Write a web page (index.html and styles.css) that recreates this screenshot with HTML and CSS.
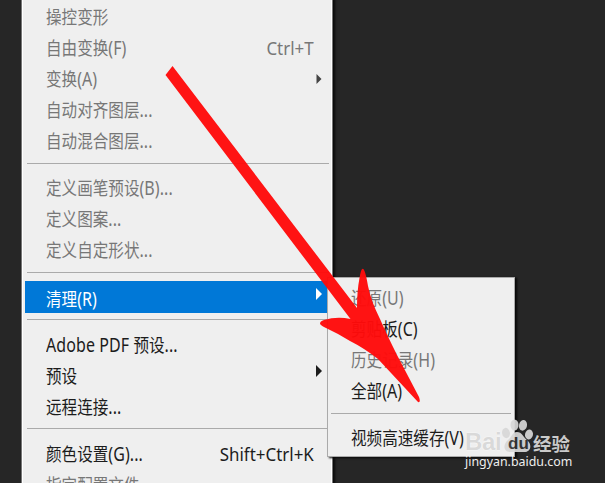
FILE: index.html
```html
<!DOCTYPE html>
<html lang="zh-CN">
<head>
<meta charset="utf-8">
<title>编辑菜单</title>
<link rel="stylesheet" href="styles.css">
</head>
<body>
<main class="stage">
  <nav class="menu">
    <div class="item off"><span class="label">操控变形</span></div>
    <div class="item off"><span class="label">自由变换<i>(F)</i></span><span class="key">Ctrl+T</span></div>
    <div class="item off low"><span class="label">变换<i>(A)</i></span><svg class="caret" viewBox="0 0 6 12"><path d="M0.5 1v10L5.5 6z"/></svg></div>
    <div class="item off"><span class="label">自动对齐图层<i>...</i></span></div>
    <div class="item off"><span class="label">自动混合图层<i>...</i></span></div>
    <hr>
    <div class="item off"><span class="label">定义画笔预设<i>(B)...</i></span></div>
    <div class="item off"><span class="label">定义图案<i>...</i></span></div>
    <div class="item off"><span class="label">定义自定形状<i>...</i></span></div>
    <hr>
    <div class="item active"><span class="label">清理<i>(R)</i></span><svg class="caret" viewBox="0 0 6 12"><path d="M0 0v12L6 6z"/></svg></div>
    <hr class="wide">
    <div class="item"><span class="label"><i>Adobe PDF </i>预设<i>...</i></span></div>
    <div class="item"><span class="label">预设</span><svg class="caret up" viewBox="0 0 6 12"><path d="M0 0v12L6 6z"/></svg></div>
    <div class="item"><span class="label">远程连接<i>...</i></span></div>
    <hr class="wide">
    <div class="item"><span class="label">颜色设置<i>(G)...</i></span><span class="key">Shift+Ctrl+K</span></div>
    <div class="item off"><span class="label">指定配置文件<i>...</i></span></div>
  </nav>
  <nav class="submenu">
    <div class="item off"><span class="label">还原<i>(U)</i></span></div>
    <div class="item"><span class="label">剪贴板<i>(C)</i></span></div>
    <div class="item off"><span class="label">历史记录<i>(H)</i></span></div>
    <div class="item"><span class="label">全部<i>(A)</i></span></div>
    <hr>
    <div class="item"><span class="label">视频高速缓存<i>(V)</i></span></div>
  </nav>
  <svg class="pointer" viewBox="0 0 605 483">
    <path d="M172.5 66L165.5 75L350.5 319Q337 316 324 320Q316 323 324 327Q337 333 350 341Q364 348 378 359L418 402Q421 403 419 397L397 355Q387 335 380 319Q371 301 368 286Q363 256 359.5 278Q357 291 357 308Z"/>
  </svg>
  <aside class="mark">
    <div class="brand">
      <span class="bai">Bai</span>
      <svg class="paw" viewBox="0 0 30 35">
        <ellipse cx="4" cy="15" rx="3.9" ry="5.2" transform="rotate(-10 4 15)"/>
        <ellipse cx="12.5" cy="7" rx="4" ry="5.6"/>
        <ellipse cx="21" cy="7.3" rx="4" ry="5.4" transform="rotate(12 21 7.3)"/>
        <ellipse cx="27" cy="16.5" rx="4" ry="5" transform="rotate(12 27 16.5)"/>
        <path d="M15 14c-5 0-5 5-9 8-5 4-5 12 2 12h14c7 0 8-7 4-11-5-4-6-9-11-9z"/>
        <text x="6" y="31">du</text>
      </svg>
      <span class="jy">经验</span>
    </div>
    <div class="site">jingyan.baidu.com</div>
  </aside>
</main>
</body>
</html>
```
FILE: styles.css
```css
* { box-sizing: border-box; }
body { margin: 0; background: #262626; }
.stage {
  position: relative;
  width: 605px;
  height: 483px;
  overflow: hidden;
  background: #262626;
  font: 18.5px/31px "Noto Sans", "Noto Sans CJK SC", sans-serif;
  color: #1c1c1c;
}
.menu {
  width: 310px;
  height: 483px;
  margin-left: 22px;
  padding: 1px 3px 0 2px;
  overflow: hidden;
  background: #efefef;
  border-left: 1px solid #fff;
  border-right: 1px solid #fff;
  box-shadow: 0 0 0 1px #777, 2px 0 2px 1px #0b0b0b;
}
.item {
  display: flex;
  justify-content: space-between;
  align-items: center;
  height: 31px;
  padding: 0 6px 0 21px;
  white-space: nowrap;
}
.label { transform: scaleX(.842); transform-origin: left; }
.label i { font-style: normal; font-size: 19px; letter-spacing: .1px; }
.key { transform: scaleX(.915); transform-origin: right; margin-right: 8px; }
.off { color: #777; }
.low { padding-top: 1px; }
.active { height: 32px; padding-top: 3px; color: #fff; background: #0078d7; }
.caret { width: 6px; height: 12px; fill: currentColor; }
.active .caret { margin-bottom: 10px; }
.up { margin-bottom: 9px; }
.off .caret { fill: #444; }
hr {
  height: 1px;
  margin: 6px 0 8px;
  border: 0;
  background: #aaa;
}
.menu hr { margin: 7px -1px 8px 2px; }
.menu .item + hr.wide { margin: 6px -1px 9px 2px; }
.submenu {
  position: absolute;
  left: 327px;
  top: 277px;
  width: 188px;
  height: 180px;
  padding: 4px 3px 0;
  background: #efefef;
  border: 1px solid #aaa;
  box-shadow: 2px 1px 2px #080808;
}
.submenu .item { padding-left: 20px; }
.submenu hr { margin: 7px 0 8px; }
.pointer {
  position: absolute;
  left: 0;
  top: 0;
  width: 605px;
  height: 483px;
  fill: #ff0b0b;
  fill-opacity: .97;
}
.mark {
  position: absolute;
  left: 465px;
  top: 418px;
  width: 112px;
  color: #d8d8d8;
  opacity: .92;
}
.brand { display: flex; align-items: flex-end; height: 35px; }
.bai {
  width: 37px;
  font: bold 24px/22px "Liberation Sans", sans-serif;
  letter-spacing: -.3px;
  text-shadow: 0 0 1px #fff, 0 0 2px #fff;
}
.paw { width: 30px; height: 35px; margin-right: 1px; fill: currentColor; overflow: visible; }
.paw text { font: bold 17px "Liberation Sans", sans-serif; fill: #333; }
.jy { font: bold 18.5px/20px "Noto Sans CJK SC", sans-serif; }
.site { color: #fff; font: 12.4px/17px "Noto Sans", sans-serif; }
```
